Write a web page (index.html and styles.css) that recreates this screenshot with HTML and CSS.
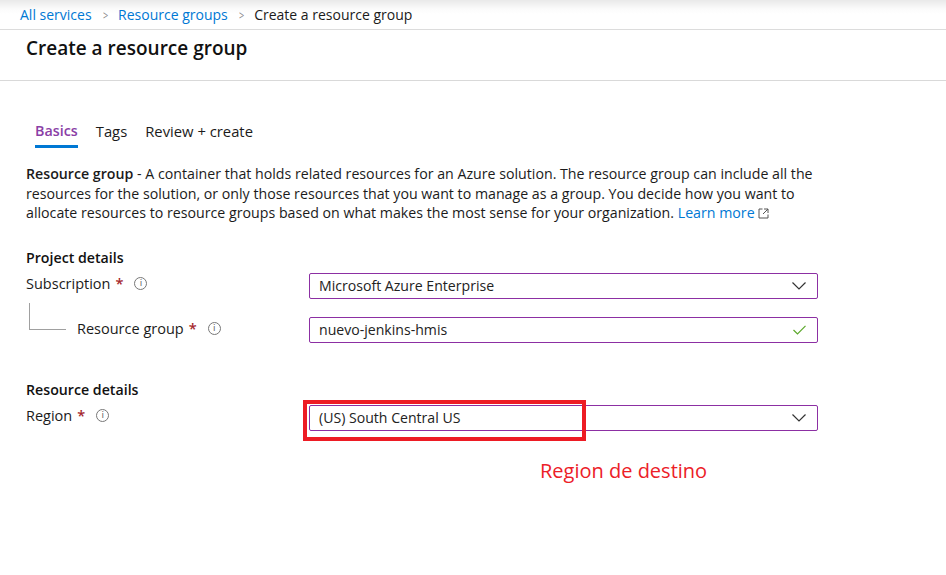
FILE: index.html
```html
<!DOCTYPE html>
<html>
<head>
<meta charset="utf-8">
<link rel="stylesheet" href="styles.css">
</head>
<body>
<div class="topbar">
  <nav class="crumbs">
    <a class="crumb-link">All services</a>
    <span class="chev">&gt;</span>
    <a class="crumb-link">Resource groups</a>
    <span class="chev">&gt;</span>
    <span class="crumb-cur">Create a resource group</span>
  </nav>
</div>
<header class="titlebar">
  <h1 class="title">Create a resource group</h1>
</header>
<main class="content">
  <div class="tabs">
    <span class="tab active">Basics</span>
    <span class="tab">Tags</span>
    <span class="tab">Review + create</span>
  </div>
  <p class="desc"><b class="semi">Resource group</b> - A container that holds related resources for an Azure solution. The resource group can include all the resources for the solution, or only those resources that you want to manage as a group. You decide how you want to allocate resources to resource groups based on what makes the most sense for your organization. <a class="link">Learn more</a> <svg class="ext" width="11" height="11" viewBox="0 0 11 11"><path d="M4.5 1H1v9h9V6.5" fill="none" stroke="#555" stroke-width="1"/><path d="M6 1h4v4M10 1L5 6" fill="none" stroke="#555" stroke-width="1"/></svg></p>

  <h2 class="section first">Project details</h2>
  <div class="row">
    <div class="label"><span>Subscription</span><span class="req">*</span><span class="info">i</span></div>
    <div class="field select"><span>Microsoft Azure Enterprise</span>
      <svg class="chevdown" width="14" height="8" viewBox="0 0 14 8"><path d="M0.5 0.5L7 7L13.5 0.5" fill="none" stroke="#333" stroke-width="1.2"/></svg></div>
  </div>
  <div class="row row2">
    <div class="label sub"><span class="tree"></span><span>Resource group</span><span class="req">*</span><span class="info">i</span></div>
    <div class="field"><span>nuevo-jenkins-hmis</span>
      <svg class="check" width="13" height="10" viewBox="0 0 13 10"><path d="M0.5 5L4.5 9L12.5 0.8" fill="none" stroke="#5ca82b" stroke-width="1.2"/></svg></div>
  </div>

  <h2 class="section second">Resource details</h2>
  <div class="row">
    <div class="label"><span>Region</span><span class="req">*</span><span class="info">i</span></div>
    <div class="field select region"><span>(US) South Central US</span>
      <svg class="chevdown" width="14" height="8" viewBox="0 0 14 8"><path d="M0.5 0.5L7 7L13.5 0.5" fill="none" stroke="#333" stroke-width="1.2"/></svg>
      <div class="highlight"></div>
    </div>
  </div>
  <div class="note">Region de destino</div>
</main>
</body>
</html>
```

FILE: styles.css
```css
* { box-sizing: border-box; }
body {
  margin: 0;
  font-family: "Open Sans", "Noto Sans", sans-serif;
  font-size: 14px;
  color: #1b1b1b;
  background: #fff;
  width: 946px;
  height: 575px;
  overflow: hidden;
}
.topbar {
  height: 30px;
  border-bottom: 1px solid #dcdcdc;
  background: linear-gradient(#e9e9e9 0px, #fbfbfb 9px, #fff 14px);
  display: flex;
  align-items: center;
  padding: 0 0 0 20px;
}
.crumbs { display: flex; align-items: center; font-size: 14px; margin-top: 0; }
.crumb-link { color: #0078d4; }
.chev { color: #888; margin: 0 9px 0 10px; font-size: 13px; transform: scaleX(0.7); display: inline-block; }
.crumb-cur { color: #1b1b1b; }
.titlebar {
  height: 51px;
  border-bottom: 1px solid #d9d9d9;
  padding: 5px 0 0 26px;
}
.title {
  margin: 0;
  font-size: 19px;
  font-weight: 600;
  color: #111;
}
.content { padding: 0 0 0 26px; }
.tabs {
  display: flex;
  margin-top: 39px;
  padding-left: 9px;
  gap: 18px;
  height: 30px;
}
.tab { font-size: 14.8px; color: #1b1b1b; position: relative; line-height: 22px; }
.tab.active { color: #8a3ea6; font-weight: 600; font-size: 14.3px; }
.tab.active::after {
  content: "";
  position: absolute;
  left: 0; right: 0; top: 25px;
  height: 3px;
  background: #0078d4;
}
.desc {
  margin: 14px 0 0 0;
  width: 792px;
  font-size: 14.2px;
  line-height: 19.6px;
  color: #1b1b1b;
}
.semi { font-weight: 600; }
.link { color: #0078d4; }
.ext { vertical-align: -1px; }
.section {
  margin: 0;
  font-size: 14.2px;
  font-weight: 600;
  color: #111;
  line-height: 20px;
}
.section.first { margin-top: 25px; }
.section.second { margin-top: 37px; }
.row {
  display: flex;
  align-items: center;
  height: 26px;
  margin-top: 5px;
}
.row2 { margin-top: 18px; }
.label {
  width: 283px;
  display: flex;
  align-items: center;
  font-size: 14.5px;
  position: relative;
  height: 100%;
  margin-top: -4px;
}
.label.sub { padding-left: 51px; margin-top: -3px; }
.tree {
  position: absolute;
  left: 3px;
  top: -12px;
  width: 37px;
  height: 27px;
  border-left: 1px solid #a0a0a0;
  border-bottom: 1px solid #a0a0a0;
}
.req { color: #a4262c; margin-left: 5px; font-weight: 600; }
.info {
  margin-left: 11px;
  width: 13px;
  height: 13px;
  border: 1px solid #777;
  border-radius: 50%;
  font-size: 9px;
  line-height: 11px;
  text-align: center;
  color: #666;
  font-family: "DejaVu Sans", sans-serif;
}
.field {
  width: 509px;
  height: 26px;
  border: 1px solid #8c2fa3;
  border-radius: 2px;
  display: flex;
  align-items: center;
  justify-content: space-between;
  padding: 0 11px 0 9px;
  font-size: 14.1px;
  color: #222;
  position: relative;
}
.highlight {
  position: absolute;
  left: -7px;
  top: -6px;
  width: 283px;
  height: 41px;
  border: 4px solid #ed1c24;
}
.note {
  margin: 26px 0 0 514px;
  font-size: 20px;
  color: #ec2027;
}
```
